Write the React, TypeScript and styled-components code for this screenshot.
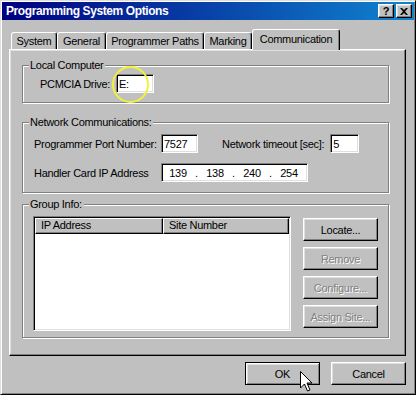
import React from "react";
import styled, { createGlobalStyle } from "styled-components";

const UI_FONT = `"Liberation Sans", Arial, sans-serif`;

const GlobalStyle = createGlobalStyle`
  html, body { margin: 0; padding: 0; background: #c0c0c0; }
  * { box-sizing: border-box; }
  body { font-family: ${UI_FONT}; font-size: 11px; letter-spacing: -0.3px; color: #000; }
`;

const Window = styled.div`
  position: relative;
  width: 416px;
  height: 395px;
  background: #c0c0c0;
  border: 1px solid;
  border-color: #dfdfdf #000 #000 #dfdfdf;
  box-shadow: inset 1px 1px 0 #fff, inset -1px -1px 0 #808080;
  padding: 1px;
  display: flex;
  flex-direction: column;
  overflow: hidden;
`;

const TitleBar = styled.div`
  height: 18px;
  display: flex;
  align-items: center;
  padding: 0 2px 0 4px;
  background: linear-gradient(90deg, #000080 0%, #1084d0 100%);
`;

const TitleText = styled.span`
  flex: 1;
  color: #fff;
  font-family: "Liberation Sans", Arial, sans-serif;
  font-weight: bold;
  font-size: 12px;
  letter-spacing: -0.4px;
  white-space: nowrap;
`;

const CaptionButtons = styled.div`
  display: flex;
  gap: 2px;
`;

const CaptionButton = styled.div`
  width: 16px;
  height: 14px;
  background: #c0c0c0;
  border: 1px solid;
  border-color: #fff #000 #000 #fff;
  box-shadow: inset -1px -1px 0 #808080, inset 1px 1px 0 #dfdfdf;
  display: flex;
  align-items: center;
  justify-content: center;
  font-family: "Liberation Sans", Arial, sans-serif;
  font-weight: bold;
  font-size: 11px;
  letter-spacing: 0;
  line-height: 1;
`;

const Body = styled.div`
  flex: 1;
  display: flex;
  flex-direction: column;
  padding: 9px 8px 0 7px;
`;

const TabStrip = styled.div`
  display: flex;
  align-items: flex-end;
  height: 20px;
  padding-left: 2px;
  position: relative;
  z-index: 1;
`;

const Tab = styled.div<{ $w: number; $active?: boolean }>`
  width: ${(p) => p.$w}px;
  height: ${(p) => (p.$active ? 21 : 17)}px;
  margin-bottom: ${(p) => (p.$active ? -1 : 0)}px;
  background: #c0c0c0;
  border-top: 1px solid #fff;
  border-left: 1px solid #fff;
  border-right: 1px solid #000;
  border-radius: 3px 3px 0 0;
  box-shadow: inset -1px 0 0 #808080;
  display: flex;
  align-items: center;
  justify-content: center;
  padding-bottom: ${(p) => (p.$active ? 2 : 0)}px;
  white-space: nowrap;
`;

const TabPanel = styled.div`
  width: 397px;
  height: 307px;
  border: 1px solid;
  border-color: #fff #000 #000 #fff;
  box-shadow: inset -1px -1px 0 #808080, inset 1px 1px 0 #dfdfdf;
  padding: 15px 0 0 12px;
  display: flex;
  flex-direction: column;
`;

const GroupFrame = styled.div<{ $gap?: number }>`
  position: relative;
  width: 367px;
  margin-top: ${(p) => p.$gap ?? 0}px;
  border: 1px solid #808080;
  box-shadow: inset 1px 1px 0 #fff, 1px 1px 0 #fff;
`;

const GroupLabel = styled.span`
  position: absolute;
  top: -8px;
  left: 6px;
  padding: 0 2px 0 1px;
  background: #c0c0c0;
  line-height: 14px;
  white-space: nowrap;
`;

const LocalRow = styled.div`
  display: flex;
  align-items: center;
  gap: 6px;
  padding: 8px 0 9px 17px;
`;

const NetGrid = styled.div`
  display: flex;
  flex-direction: column;
  gap: 10px;
  padding: 11px 0 10px 11px;
`;

const FieldRow = styled.div`
  display: flex;
  align-items: center;
`;

const FieldLabel = styled.span<{ $w?: number; $ml?: number }>`
  ${(p) => (p.$w ? `width: ${p.$w}px;` : "")}
  margin-left: ${(p) => p.$ml ?? 0}px;
  margin-right: ${(p) => (p.$w ? 0 : 6)}px;
  white-space: nowrap;
`;

const Sunken = styled.div<{ $w: number }>`
  width: ${(p) => p.$w}px;
  height: 19px;
  background: #fff;
  border: 1px solid;
  border-color: #808080 #fff #fff #808080;
  box-shadow: inset 1px 1px 0 #000, inset -1px -1px 0 #dfdfdf;
  padding: 0 2px;
  display: flex;
  align-items: center;
  white-space: nowrap;
`;

const IpSegment = styled.span`
  width: 28px;
  text-align: center;
`;

const IpDot = styled.span`
  width: 9px;
  text-align: center;
`;

const GroupContent = styled.div`
  display: flex;
  gap: 12px;
  padding: 11px 0 6px 10px;
`;

const ListView = styled.div`
  width: 258px;
  height: 115px;
  background: #fff;
  border: 1px solid;
  border-color: #808080 #fff #fff #808080;
  box-shadow: inset 1px 1px 0 #000, inset -1px -1px 0 #dfdfdf;
  padding: 1px;
  display: flex;
  flex-direction: column;
`;

const ListHeader = styled.div`
  display: flex;
  height: 16px;
`;

const HeaderCell = styled.div<{ $w?: number }>`
  ${(p) => (p.$w ? `width: ${p.$w}px;` : "flex: 1;")}
  height: 16px;
  background: #c0c0c0;
  border: 1px solid;
  border-color: #fff #000 #000 #fff;
  box-shadow: inset -1px -1px 0 #808080;
  padding-left: 5px;
  line-height: 13px;
  white-space: nowrap;
  overflow: hidden;
`;

const ButtonColumn = styled.div`
  display: flex;
  flex-direction: column;
  gap: 6px;
  margin-top: 2px;
`;

const Button = styled.div<{ $disabled?: boolean; $default?: boolean }>`
  width: 75px;
  height: 23px;
  background: #c0c0c0;
  border: 1px solid;
  border-color: ${(p) => (p.$default ? "#000" : "#fff #000 #000 #fff")};
  box-shadow: ${(p) =>
    p.$default
      ? "inset 1px 1px 0 #fff, inset -1px -1px 0 #808080, inset 2px 2px 0 #dfdfdf"
      : "inset -1px -1px 0 #808080, inset 1px 1px 0 #dfdfdf"};
  display: flex;
  align-items: center;
  justify-content: center;
  color: ${(p) => (p.$disabled ? "#808080" : "#000")};
  text-shadow: ${(p) => (p.$disabled ? "1px 1px 0 #fff" : "none")};
  white-space: nowrap;
`;

const Footer = styled.div`
  display: flex;
  justify-content: flex-end;
  gap: 11px;
  margin-top: 6px;
`;

const Highlight = styled.div`
  position: absolute;
  left: 111px;
  top: 65px;
  width: 37px;
  height: 37px;
  border: 2px solid #f2f23c;
  border-radius: 50%;
  pointer-events: none;
`;

const Cursor = styled.svg`
  position: absolute;
  left: 299px;
  top: 370px;
  pointer-events: none;
`;

export default function App() {
  return (
    <>
      <GlobalStyle />
      <Window>
        <TitleBar>
          <TitleText>Programming System Options</TitleText>
          <CaptionButtons>
            <CaptionButton>?</CaptionButton>
            <CaptionButton>
              <svg width="8" height="7" viewBox="0 0 8 7">
                <path d="M0 0h2l2 2 2-2h2L5 3.5 8 7H6L4 5 2 7H0l3-3.5z" fill="#000" />
              </svg>
            </CaptionButton>
          </CaptionButtons>
        </TitleBar>
        <Body>
          <TabStrip>
            <Tab $w={46}>System</Tab>
            <Tab $w={49}>General</Tab>
            <Tab $w={98}>Programmer Paths</Tab>
            <Tab $w={48}>Marking</Tab>
            <Tab $w={88} $active>
              Communication
            </Tab>
          </TabStrip>
          <TabPanel>
            <GroupFrame>
              <GroupLabel>Local Computer</GroupLabel>
              <LocalRow>
                <span>PCMCIA Drive:</span>
                <Sunken $w={38}>E:</Sunken>
              </LocalRow>
            </GroupFrame>
            <GroupFrame $gap={19}>
              <GroupLabel>Network Communications:</GroupLabel>
              <NetGrid>
                <FieldRow>
                  <FieldLabel $w={127}>Programmer Port Number:</FieldLabel>
                  <Sunken $w={37}>7527</Sunken>
                  <FieldLabel $ml={24}>Network timeout [sec]:</FieldLabel>
                  <Sunken $w={29}>5</Sunken>
                </FieldRow>
                <FieldRow>
                  <FieldLabel $w={127}>Handler Card IP Address</FieldLabel>
                  <Sunken $w={147}>
                    <IpSegment>139</IpSegment>
                    <IpDot>.</IpDot>
                    <IpSegment>138</IpSegment>
                    <IpDot>.</IpDot>
                    <IpSegment>240</IpSegment>
                    <IpDot>.</IpDot>
                    <IpSegment>254</IpSegment>
                  </Sunken>
                </FieldRow>
              </NetGrid>
            </GroupFrame>
            <GroupFrame $gap={11}>
              <GroupLabel>Group Info:</GroupLabel>
              <GroupContent>
                <ListView>
                  <ListHeader>
                    <HeaderCell $w={128}>IP Address</HeaderCell>
                    <HeaderCell>Site Number</HeaderCell>
                  </ListHeader>
                </ListView>
                <ButtonColumn>
                  <Button>Locate...</Button>
                  <Button $disabled>Remove</Button>
                  <Button $disabled>Configure...</Button>
                  <Button $disabled>Assign Site...</Button>
                </ButtonColumn>
              </GroupContent>
            </GroupFrame>
          </TabPanel>
          <Footer>
            <Button $default>OK</Button>
            <Button>Cancel</Button>
          </Footer>
        </Body>
        <Highlight />
        <Cursor width="13" height="21" viewBox="0 0 13 21">
          <path
            d="M0.5 0.5 L0.5 17 L4.5 13 L7.5 20 L10 19 L7 12 L12 12 Z"
            fill="#fff"
            stroke="#000"
            strokeWidth="1"
            strokeLinejoin="miter"
          />
        </Cursor>
      </Window>
    </>
  );
}
